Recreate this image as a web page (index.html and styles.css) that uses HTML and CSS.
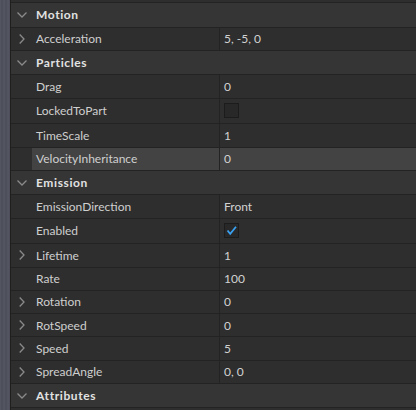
FILE: index.html
```html
<!DOCTYPE html>
<html lang="en">
<head>
    <meta charset="UTF-8">
    <title>Properties</title>
    <link rel="stylesheet" href="styles.css">
</head>
<body>

<div class="backdrop"></div>

<div class="panel">
    <div class="top-line"></div>

    <!-- Motion -->
    <div class="group">
        <span class="toggle"><svg width="10" height="6" viewBox="0 0 10 6"><path d="M0.5 0.5 L5 5 L9.5 0.5" /></svg></span>
        <span class="group-title">Motion</span>
    </div>
    <div class="prop">
        <span class="toggle"><svg width="6" height="10" viewBox="0 0 6 10"><path d="M0.7 0.5 L5 5 L0.7 9.5" /></svg></span>
        <span class="name">Acceleration</span>
        <span class="value">5, -5, 0</span>
    </div>

    <!-- Particles -->
    <div class="group">
        <span class="toggle"><svg width="10" height="6" viewBox="0 0 10 6"><path d="M0.5 0.5 L5 5 L9.5 0.5" /></svg></span>
        <span class="group-title">Particles</span>
    </div>
    <div class="prop">
        <span class="toggle"></span>
        <span class="name">Drag</span>
        <span class="value">0</span>
    </div>
    <div class="prop tall">
        <span class="toggle"></span>
        <span class="name">LockedToPart</span>
        <span class="value"><span class="checkbox"></span></span>
    </div>
    <div class="prop">
        <span class="toggle"></span>
        <span class="name">TimeScale</span>
        <span class="value">1</span>
    </div>
    <div class="prop selected">
        <span class="toggle"></span>
        <span class="name">VelocityInheritance</span>
        <span class="value">0</span>
    </div>

    <!-- Emission -->
    <div class="group">
        <span class="toggle"><svg width="10" height="6" viewBox="0 0 10 6"><path d="M0.5 0.5 L5 5 L9.5 0.5" /></svg></span>
        <span class="group-title">Emission</span>
    </div>
    <div class="prop">
        <span class="toggle"></span>
        <span class="name">EmissionDirection</span>
        <span class="value">Front</span>
    </div>
    <div class="prop tall">
        <span class="toggle"></span>
        <span class="name">Enabled</span>
        <span class="value">
            <span class="checkbox"><svg width="13" height="13" viewBox="0 0 13 13"><path d="M2.5 6.5 L5.2 9.8 L11 2.8" /></svg></span>
        </span>
    </div>
    <div class="prop">
        <span class="toggle"><svg width="6" height="10" viewBox="0 0 6 10"><path d="M0.7 0.5 L5 5 L0.7 9.5" /></svg></span>
        <span class="name">Lifetime</span>
        <span class="value">1</span>
    </div>
    <div class="prop">
        <span class="toggle"></span>
        <span class="name">Rate</span>
        <span class="value">100</span>
    </div>
    <div class="prop">
        <span class="toggle"><svg width="6" height="10" viewBox="0 0 6 10"><path d="M0.7 0.5 L5 5 L0.7 9.5" /></svg></span>
        <span class="name">Rotation</span>
        <span class="value">0</span>
    </div>
    <div class="prop">
        <span class="toggle"><svg width="6" height="10" viewBox="0 0 6 10"><path d="M0.7 0.5 L5 5 L0.7 9.5" /></svg></span>
        <span class="name">RotSpeed</span>
        <span class="value">0</span>
    </div>
    <div class="prop">
        <span class="toggle"><svg width="6" height="10" viewBox="0 0 6 10"><path d="M0.7 0.5 L5 5 L0.7 9.5" /></svg></span>
        <span class="name">Speed</span>
        <span class="value">5</span>
    </div>
    <div class="prop">
        <span class="toggle"><svg width="6" height="10" viewBox="0 0 6 10"><path d="M0.7 0.5 L5 5 L0.7 9.5" /></svg></span>
        <span class="name">SpreadAngle</span>
        <span class="value">0, 0</span>
    </div>

    <!-- Attributes -->
    <div class="group">
        <span class="toggle"><svg width="10" height="6" viewBox="0 0 10 6"><path d="M0.5 0.5 L5 5 L9.5 0.5" /></svg></span>
        <span class="group-title">Attributes</span>
    </div>
</div>

</body>
</html>
```

FILE: styles.css
```css
* {
    margin: 0;
    padding: 0;
    box-sizing: border-box;
}

body {
    font-family: Lato, 'Liberation Sans', sans-serif;
    font-size: 12px;
    background-color: #2e2e2e;
    display: flex;
    height: 410px;
    overflow: hidden;
}

.backdrop {
    width: 10px;
    flex-shrink: 0;
    background-color: #4f525e;
    background-image: repeating-linear-gradient(90deg, rgba(255, 255, 255, 0.04) 0px, rgba(0, 0, 0, 0.06) 2px, rgba(255, 255, 255, 0.03) 4px);
}

.panel {
    flex: 1;
    border-left: 1px solid #1f1f1f;
    background-color: #2e2e2e;
    padding-top: 2px;
}

.top-line {
    height: 1px;
    background: #232323;
}

.group,
.prop {
    display: flex;
    align-items: stretch;
    border-bottom: 1px solid #232323;
}

.group {
    height: 24.5px;
    background-color: #353535;
}

.prop {
    height: 23.25px;
    background-color: #2e2e2e;
}

.prop.tall {
    height: 25.8px;
}

.toggle {
    width: 21px;
    flex-shrink: 0;
    display: flex;
    align-items: center;
    justify-content: center;
}

.toggle svg path {
    fill: none;
    stroke: #8a8a8a;
    stroke-width: 1.3;
}

.group-title {
    display: flex;
    align-items: center;
    padding-left: 4px;
    font-weight: bold;
    letter-spacing: 0.6px;
    color: #e2e2e2;
}

.name {
    width: 188px;
    flex-shrink: 0;
    display: flex;
    align-items: center;
    padding-left: 4px;
    color: #cfcfcf;
    border-right: 1px solid #232323;
}

.value {
    flex: 1;
    display: flex;
    align-items: center;
    padding-left: 4px;
    color: #d2d2d2;
}

.selected .name,
.selected .value {
    background-color: #434343;
}

.checkbox {
    width: 15px;
    height: 15px;
    background-color: #282828;
    border: 1px solid #1c1c1c;
    display: flex;
    align-items: center;
    justify-content: center;
}

.checkbox svg path {
    fill: none;
    stroke: #3aa0f0;
    stroke-width: 1.8;
}
```
